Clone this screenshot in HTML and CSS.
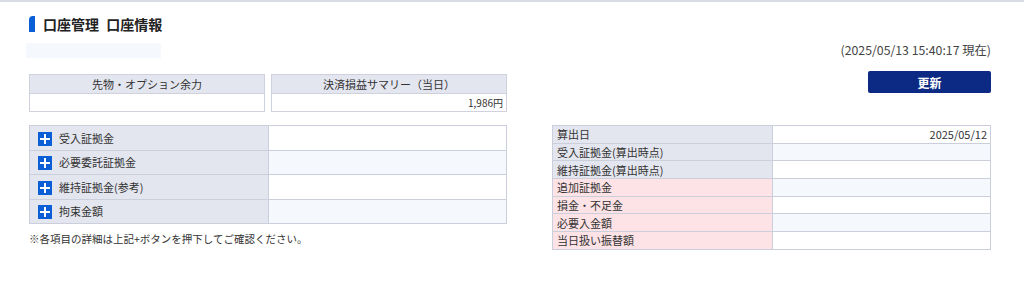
FILE: index.html
```html
<!DOCTYPE html>
<html lang="ja">
<head>
    <meta charset="UTF-8">
    <title>口座管理 口座情報</title>
    <link rel="stylesheet" href="styles.css">
</head>
<body>
    <div class="page">
        <h1 class="title"><span class="title-mark"></span>口座管理 口座情報</h1>

        <div class="meta-row">
            <div class="acct-box"></div>
            <div class="asof">(2025/05/13 15:40:17 現在)</div>
        </div>

        <div class="summary-row">
            <div class="summary">
                <div class="sum-box">
                    <div class="sum-head">先物・オプション余力</div>
                    <div class="sum-val"></div>
                </div>
                <div class="sum-box">
                    <div class="sum-head">決済損益サマリー（当日）</div>
                    <div class="sum-val">1,986円</div>
                </div>
            </div>
            <button class="refresh" type="button">更新</button>
        </div>

        <div class="detail-row">
            <div class="detail-left">
                <table class="margin-table">
                    <tr>
                        <th><span class="plus"></span>受入証拠金</th>
                        <td></td>
                    </tr>
                    <tr class="alt">
                        <th><span class="plus"></span>必要委託証拠金</th>
                        <td></td>
                    </tr>
                    <tr>
                        <th><span class="plus"></span>維持証拠金(参考)</th>
                        <td></td>
                    </tr>
                    <tr class="alt">
                        <th><span class="plus"></span>拘束金額</th>
                        <td></td>
                    </tr>
                </table>
                <p class="note">※各項目の詳細は上記+ボタンを押下してご確認ください。</p>
            </div>

            <table class="calc-table">
                <tr>
                    <th>算出日</th>
                    <td>2025/05/12</td>
                </tr>
                <tr class="alt">
                    <th>受入証拠金(算出時点)</th>
                    <td></td>
                </tr>
                <tr>
                    <th>維持証拠金(算出時点)</th>
                    <td></td>
                </tr>
                <tr class="alt">
                    <th class="warn">追加証拠金</th>
                    <td></td>
                </tr>
                <tr>
                    <th class="warn">損金・不足金</th>
                    <td></td>
                </tr>
                <tr class="alt">
                    <th class="warn">必要入金額</th>
                    <td></td>
                </tr>
                <tr>
                    <th class="warn">当日扱い振替額</th>
                    <td></td>
                </tr>
            </table>
        </div>
    </div>
</body>
</html>
```

FILE: styles.css
```css
body {
    margin: 0;
    border-top: 2px solid #d9dbe5;
    background-color: #fff;
    font-family: "Noto Sans CJK JP", "Noto Sans", sans-serif;
    color: #333;
}
.page {
    padding: 0 33px 0 29px;
}
.title {
    display: flex;
    align-items: center;
    gap: 8px;
    margin: 14px 0 0;
    height: 16px;
    font-size: 14px;
    line-height: 16px;
    font-weight: bold;
    word-spacing: 4px;
    color: #222;
}
.title-mark {
    width: 6px;
    height: 16px;
    background-color: #0b5fd6;
    border-radius: 4px 0 0 0;
}
.meta-row {
    display: flex;
    justify-content: space-between;
    align-items: flex-start;
    margin-top: 11px;
    height: 15px;
}
.acct-box {
    width: 135px;
    height: 15px;
    margin-left: -3px;
    background-color: #f5f9fe;
}
.asof {
    font-size: 12.3px;
    line-height: 14px;
    color: #444;
}
.summary-row {
    display: flex;
    justify-content: space-between;
    align-items: flex-start;
    margin-top: 13px;
}
.summary {
    display: flex;
    gap: 6px;
    margin-top: 3px;
}
.sum-box {
    width: 234px;
    border: 1px solid #cfd2de;
}
.sum-head {
    height: 18px;
    line-height: 18px;
    text-align: center;
    font-size: 11px;
    background-color: #e4e6ef;
    border-bottom: 1px solid #cfd2de;
}
.sum-val {
    height: 17px;
    line-height: 17px;
    text-align: right;
    font-size: 10px;
    padding-right: 3px;
}
.refresh {
    width: 123px;
    height: 22px;
    padding: 0;
    border: none;
    border-radius: 2px;
    background-color: #0c2a84;
    color: #fff;
    font-family: inherit;
    font-size: 12px;
    font-weight: bold;
    cursor: pointer;
}
.detail-row {
    display: flex;
    justify-content: space-between;
    align-items: flex-start;
    margin-top: 13px;
}
.margin-table,
.calc-table {
    border-collapse: collapse;
    font-size: 11px;
}
.margin-table {
    width: 478px;
}
.margin-table th,
.margin-table td,
.calc-table th,
.calc-table td {
    border: 1px solid #cbcedb;
    padding: 0;
    box-sizing: border-box;
}
.margin-table th {
    width: 239px;
    height: 24.5px;
    text-align: left;
    font-weight: normal;
    background-color: #e4e6ef;
    padding-left: 8px;
}
.margin-table th,
.calc-table th {
    white-space: nowrap;
}
.plus {
    display: inline-block;
    position: relative;
    width: 14px;
    height: 14px;
    margin-right: 7px;
    vertical-align: -3px;
    background-color: #0b5fd6;
}
.plus::before,
.plus::after {
    content: "";
    position: absolute;
    background-color: #fff;
}
.plus::before {
    left: 2px;
    top: 6px;
    width: 10px;
    height: 2px;
}
.plus::after {
    left: 6px;
    top: 2px;
    width: 2px;
    height: 10px;
}
.alt td {
    background-color: #f5f9fe;
}
.note {
    margin: 7px 0 0;
    font-size: 10.5px;
    color: #333;
}
.calc-table {
    width: 439px;
}
.calc-table th {
    width: 220px;
    height: 17.7px;
    text-align: left;
    font-weight: normal;
    padding-left: 4px;
    background-color: #e4e6ef;
}
.calc-table th.warn {
    background-color: #fde2e6;
}
.calc-table td {
    text-align: right;
    padding-right: 3px;
}
```
